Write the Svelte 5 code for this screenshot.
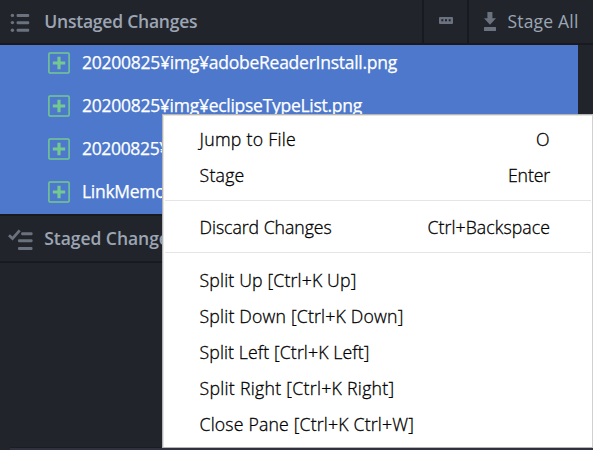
<script>
  const files = [
    { name: '20200825¥img¥adobeReaderInstall.png', width: 315 },
    { name: '20200825¥img¥eclipseTypeList.png', width: 280 },
    { name: '20200825¥', width: 87 },
    { name: 'LinkMemo', width: 83.5 }
  ];

  const groups = [
    [
      { label: 'Jump to File', width: 96.5, key: 'O', keyWidth: 14 },
      { label: 'Stage', width: 45, key: 'Enter', keyWidth: 42 }
    ],
    [{ label: 'Discard Changes', width: 132.2, key: 'Ctrl+Backspace', keyWidth: 122.5 }],
    [
      { label: 'Split Up [Ctrl+K Up]', width: 157 },
      { label: 'Split Down [Ctrl+K Down]', width: 204 },
      { label: 'Split Left [Ctrl+K Left]', width: 170 },
      { label: 'Split Right [Ctrl+K Right]', width: 195 },
      { label: 'Close Pane [Ctrl+K Ctrl+W]', width: 214.5 }
    ]
  ];

  function fit(node, width) {
    const natural = node.getBoundingClientRect().width;
    node.style.letterSpacing = `${(width - natural) / node.textContent.length}px`;
  }
</script>

<div class="app">
  <header class="bar unstaged">
    <svg class="list-icon" width="20" height="20" viewBox="0 0 20 20" fill="#6b727f">
      <circle cx="2.4" cy="2.4" r="1.7" /><circle cx="2.4" cy="9.6" r="1.7" /><circle cx="2.4" cy="17.2" r="1.7" />
      <rect x="6.6" y="1" width="12.6" height="3" rx="1" />
      <rect x="6.6" y="8.2" width="12.6" height="3" rx="1" />
      <rect x="6.6" y="15.8" width="12.6" height="3" rx="1" />
    </svg>
    <span class="title"><span use:fit={153}>Unstaged Changes</span></span>
    <button class="more" aria-label="More">
      <svg width="14" height="7" viewBox="0 0 14 7">
        <rect width="14" height="7" rx="1" fill="#6b727f" />
        <path d="M2.3 2.3h2v2h-2zM6 2.3h2v2H6zM9.7 2.3h2v2h-2z" fill="#21252b" />
      </svg>
    </button>
    <button class="stage-all">
      <svg width="12" height="19" viewBox="0 0 12 19" fill="#6b727f">
        <path d="M3.4 0h5v6.2H12L6 12.8 0 6.2h3.4z" /><rect y="15" width="12" height="4" rx=".6" />
      </svg>
      <span><span use:fit={71}>Stage All</span></span>
    </button>
  </header>

  <div class="files">
    {#each files as file}
      <div class="file">
        <svg width="22" height="22" viewBox="0 0 22 22" fill="none" stroke="#73c990">
          <rect x=".9" y=".9" width="20.2" height="20.2" rx="1" stroke-width="1.5" />
          <path d="M11 4.8v12.4M4.8 11h12.4" stroke-width="3.2" />
        </svg>
        <span use:fit={file.width}>{file.name}</span>
      </div>
    {/each}
  </div>

  <header class="bar staged">
    <svg class="check-icon" width="25" height="22" viewBox="0 0 25 22" fill="#6b727f">
      <path d="M1 6.3L4.5 9.6 11.7 1.4" fill="none" stroke="#6b727f" stroke-width="2.8" />
      <rect x="13.2" y="3.2" width="11.3" height="3" rx="1" />
      <rect x="10" y="10.2" width="14.5" height="3" rx="1" />
      <rect x="10" y="18" width="14.5" height="3" rx="1" />
    </svg>
    <span class="title"><span use:fit={133}>Staged Changes</span></span>
  </header>

  <div class="empty"></div>
  <div class="editor"></div>

  <div class="menu" role="menu">
    {#each groups as group}
      <div class="group">
        {#each group as item}
          <div class="item" role="menuitem" tabindex="-1">
            <span use:fit={item.width}>{item.label}</span>
            {#if item.key}<span use:fit={item.keyWidth}>{item.key}</span>{/if}
          </div>
        {/each}
      </div>
    {/each}
  </div>
</div>

<style>
  :global(body) { margin: 0; background: #21252b; }
  .app {
    position: relative;
    width: 593px;
    height: 450px;
    overflow: hidden;
    display: flex;
    flex-direction: column;
    background: #21252b;
    color: #9da5b4;
    font: 17.5px 'Open Sans', 'Noto Sans', sans-serif;
    white-space: nowrap;
  }
  svg { display: block; flex: none; }
  .bar { display: flex; align-items: center; box-sizing: border-box; flex: none; }
  .unstaged { height: 45px; border-bottom: 2px solid #181a1f; }
  .list-icon { margin: 2px 0 0 10px; }
  .title { margin-left: 14.3px; padding-bottom: 2px; font-weight: 600; flex: 1; }
  button {
    display: flex;
    align-items: center;
    height: 100%;
    padding: 0;
    box-sizing: border-box;
    border: 0;
    border-left: 2px solid #181a1f;
    background: none;
    color: inherit;
    font: inherit;
  }
  .more { width: 45px; padding: 0 0 2px 15px; }
  .stage-all { width: 126px; padding-left: 15px; }
  .stage-all > span { margin-left: 11.5px; padding-bottom: 2px; }
  .files { width: 578px; height: 169px; overflow: hidden; background: #4d78cc; flex: none; color: #fff; -webkit-text-stroke: 0.25px #fff; }
  .file { display: flex; align-items: center; height: 43px; padding-left: 48px; }
  .file:first-child { margin-top: -3px; }
  .file span { margin-left: 12px; padding-bottom: 3px; }
  .file svg { margin-bottom: 1px; }
  .staged { height: 49px; border-top: 2px solid #181a1f; border-bottom: 2px solid #181a1f; }
  .check-icon { margin: 2px 0 0 8px; }
  .staged .title { margin-left: 11.3px; }
  .empty { flex: 1; }
  .editor { height: 3px; margin-left: 10px; background: #30303e; border-top: 1px solid #1b1d23; box-sizing: border-box; }
  .menu {
    position: absolute;
    left: 162px;
    top: 114px;
    width: 431px;
    height: 334px;
    box-sizing: border-box;
    padding: 6px 0 0 1px;
    border: 1px solid #b5b5b5;
    border-right-color: #d0d0d0;
    box-shadow: inset 1px 1px #e4e4e4;
    background: #fff;
    color: #000;
  }
  .group + .group { margin: 7px 1px 0; padding-top: 8px; border-top: 1px solid #e5e5e5; }
  .group:last-child { padding-top: 9px; }
  .item {
    display: flex;
    justify-content: space-between;
    align-items: center;
    height: 36px;
    padding: 0 42px 0 35.5px;
    font-size: 17.7px;
    font-weight: 300;
    -webkit-text-stroke: 0.3px #000;
  }
  .group + .group .item { padding: 0 41px 0 34.5px; }
</style>
